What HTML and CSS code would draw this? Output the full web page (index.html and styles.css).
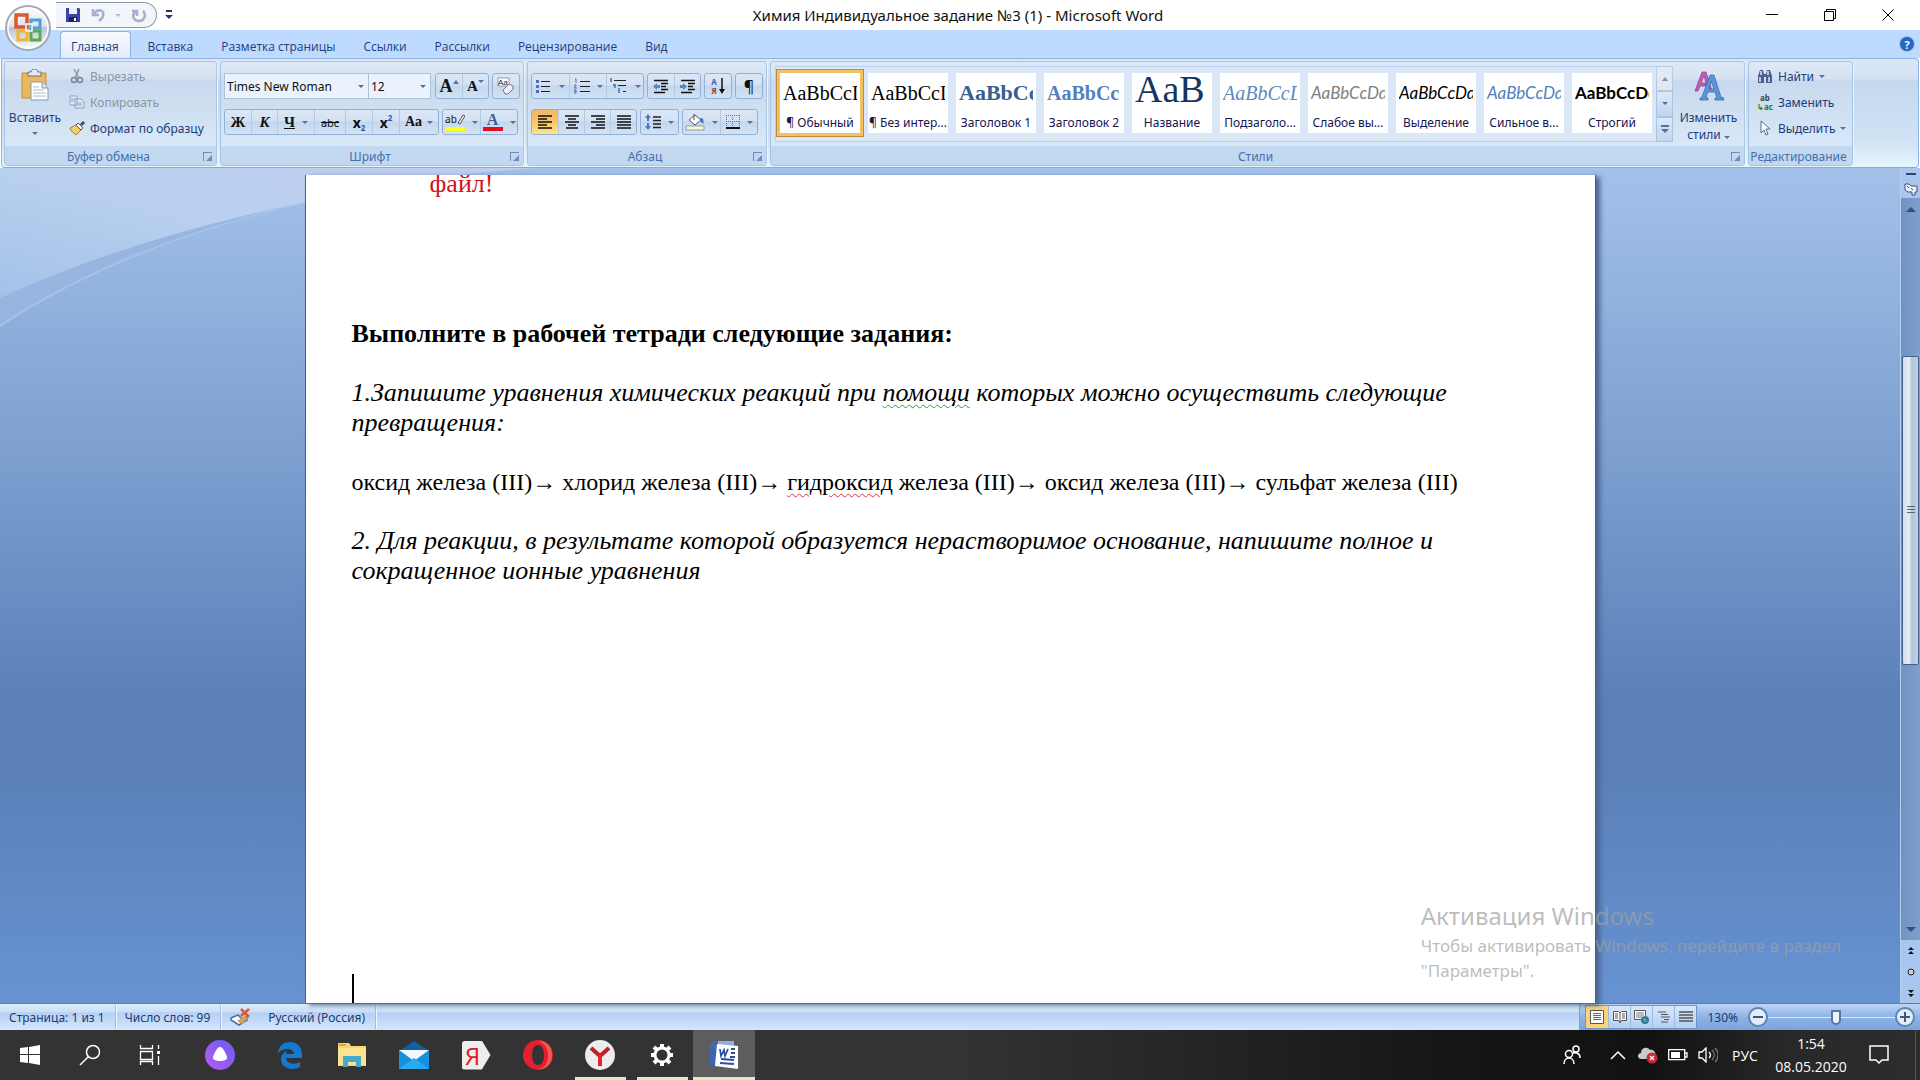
FILE: index.html
```html
<!DOCTYPE html>
<html lang="ru">
<head>
    <meta charset="utf-8">
    <title>Химия Индивидуальное задание №3 (1) - Microsoft Word</title>
    <link rel="stylesheet" href="styles.css">
</head>
<body>
    <header class="top">
        <div class="titlebar">
            <div class="quick">
                <button class="plain" aria-label="Сохранить"><svg width="16" height="16" viewBox="0 0 16 16"><path d="M1 1h13l1 1v13H1z" fill="#3a44a8"/><path d="M4 1h8v6H4z" fill="#e8eefc"/><path d="M4 10h8v5H4z" fill="#1c2358"/><path d="M9 11h2v3H9z" fill="#fff"/></svg></button>
                <button class="plain undo" aria-label="Отменить"><svg width="16" height="16" viewBox="0 0 16 16"><path d="M2 2v6h6M3 7C7 1 14 3 12 9c-1 3-3 4-4 5" fill="none" stroke="#a3b1cb" stroke-width="2.500"/></svg><i class="arrow pale"></i></button>
                <button class="plain redo" aria-label="Вернуть"><svg width="16" height="16" viewBox="0 0 16 16"><path d="M4 5c-4 4-1 9 4 9s8-6 4-10M1 4h5v5" fill="none" stroke="#a3b1cb" stroke-width="2.500"/></svg></button>
            </div>
            <button class="plain customize" aria-label="Настройка панели"><svg width="8" height="10" viewBox="0 0 8 10"><path d="M1 0h6v2H1zM0 5h8L4 9z" fill="#223a6b"/></svg></button>
            <h1 class="title">Химия Индивидуальное задание №3 (1) - Microsoft Word</h1>
            <div class="window-buttons">
                <button class="plain" aria-label="Свернуть"><svg width="14" height="14" viewBox="0 0 14 14"><path d="M1 6.500h12" stroke="#000"/></svg></button>
                <button class="plain" aria-label="Восстановить"><svg width="14" height="14" viewBox="0 0 14 14"><path d="M1.500 3.500h9v9h-9zM3.500 3V1.500h9v9H11" fill="none" stroke="#000"/></svg></button>
                <button class="plain" aria-label="Закрыть"><svg width="14" height="14" viewBox="0 0 14 14"><path d="M1.500 1.500l11 11M12.500 1.500l-11 11" stroke="#000"/></svg></button>
            </div>
        </div>
        <button class="office" aria-label="Кнопка Office">
            <svg width="46" height="46" viewBox="0 0 46 46">
                <defs>
                    <linearGradient id="orb" x1="0" y1="0" x2="0" y2="1"><stop offset="0" stop-color="#fff"/><stop offset=".45" stop-color="#dfe3ee"/><stop offset=".5" stop-color="#b9c4da"/><stop offset="1" stop-color="#fff"/></linearGradient>
                </defs>
                <circle cx="23" cy="23" r="22" fill="url(#orb)" stroke="#a2a9b8" stroke-width="2"/>
                <circle cx="23" cy="23" r="20" fill="none" stroke="#fff" stroke-width="1.500"/>
                <path d="M11 10h11v12H11z" fill="none" stroke="#dc5a2b" stroke-width="3.500"/>
                <path d="M26 15h9v8h-9z" fill="none" stroke="#4aa0d8" stroke-width="3"/>
                <path d="M13 26h9v9h-9z" fill="none" stroke="#f0b429" stroke-width="3"/>
                <path d="M26 26h9v9h-9z" fill="none" stroke="#62a64b" stroke-width="3"/>
                <path d="M21 19h6v7h-6z" fill="none" stroke="#fff" stroke-width="1.500"/>
            </svg>
        </button>
        <nav class="tabs">
            <a href="#" class="active">Главная</a>
            <a href="#">Вставка</a>
            <a href="#">Разметка страницы</a>
            <a href="#">Ссылки</a>
            <a href="#">Рассылки</a>
            <a href="#">Рецензирование</a>
            <a href="#">Вид</a>
            <button class="plain help" aria-label="Справка">?</button>
        </nav>
    </header>

    <div class="ribbon">
        <section class="group">
            <div class="group-body clipboard">
                <button class="big">
                    <svg width="28" height="32" viewBox="0 0 28 32"><path d="M1 4h24v25H1z" fill="#eab95c" stroke="#c08c3a"/><path d="M7 3h3c0-4 7-4 7 0h3v4H7z" fill="#e6e8ee" stroke="#6a6f7c"/><path d="M10 13h11l6 6v12H10z" fill="#fff" stroke="#8796b4"/><path d="M21 13v6h6" fill="#dce6f6" stroke="#8796b4"/><path d="M12 18h6M12 21h11M12 24h13M12 27h13" stroke="#a9b9d6"/></svg>
                    <span>Вставить</span>
                    <i class="arrow"></i>
                </button>
                <div class="list">
                    <button class="item off"><svg width="16" height="16" viewBox="0 0 16 16"><path d="M5 1l5 9M10 1L6 10" stroke="#8a98ad" stroke-width="1.500"/><circle cx="5" cy="12" r="2.500" fill="none" stroke="#7b8698" stroke-width="1.500"/><circle cx="11" cy="12" r="2.500" fill="none" stroke="#7b8698" stroke-width="1.500"/></svg>Вырезать</button>
                    <button class="item off"><svg width="16" height="16" viewBox="0 0 16 16"><path d="M1 2h7v9H1zM6 5h6l3 3v6H6z" fill="#e2ebf8" stroke="#8ca0c8"/><path d="M2 5h4M2 7h3M8 9h5M8 11h5" stroke="#8ca0c8"/></svg>Копировать</button>
                    <button class="item"><svg width="16" height="16" viewBox="0 0 16 16"><path d="M1 8l6-3 5 5-5 5C5 13 2 12 1 8z" fill="#ecd06c" stroke="#a87f28"/><path d="M7 5l2-2 5 5-2 2z" fill="#fff" stroke="#555"/><path d="M11 4l3-3 2 2-3 3z" fill="#3e4a66"/></svg>Формат по образцу</button>
                </div>
            </div>
            <footer><span>Буфер обмена</span><button class="launcher" aria-label="Буфер обмена"></button></footer>
        </section>

        <section class="group">
            <div class="group-body rows">
                <div class="row">
                    <div class="combos">
                        <label class="combo font-name"><select aria-label="Шрифт"><option>Times New Roman</option></select><i class="arrow"></i></label>
                        <label class="combo font-size"><select aria-label="Размер шрифта"><option>12</option></select><i class="arrow"></i></label>
                    </div>
                    <div class="buttons">
                        <button class="tool serif grow">A<i class="arrow up"></i></button>
                        <button class="tool serif shrink">A<i class="arrow"></i></button>
                    </div>
                    <div class="buttons">
                        <button class="tool" aria-label="Очистить формат"><svg width="18" height="18" viewBox="0 0 18 18"><path d="M1 1h11v8H1z" fill="#fff" stroke="#99a"/><text x="1" y="8" font-size="8" font-family="Liberation Sans" fill="#222">Aa</text><path d="M6 13l6-6 4 2v3l-5 5H8z" fill="#eef0fa" stroke="#70748a"/></svg></button>
                    </div>
                </div>
                <div class="row">
                    <div class="buttons">
                        <button class="tool serif">Ж</button>
                        <button class="tool serif"><em>К</em></button>
                        <button class="tool serif wide"><u>Ч</u><i class="arrow"></i></button>
                        <button class="tool strike"><s>abc</s></button>
                        <button class="tool script">x<sub>2</sub></button>
                        <button class="tool script">x<sup>2</sup></button>
                        <button class="tool serif case">Aa<i class="arrow"></i></button>
                    </div>
                    <div class="buttons">
                        <button class="tool wide"><span class="swatch yellow">ab<svg width="8" height="12" viewBox="0 0 8 12"><path d="M1 10L6 2l2 1-5 8z" fill="#eee" stroke="#555"/></svg></span><i class="arrow"></i></button>
                        <button class="tool wide"><span class="swatch red">A</span><i class="arrow"></i></button>
                    </div>
                </div>
            </div>
            <footer><span>Шрифт</span><button class="launcher" aria-label="Шрифт"></button></footer>
        </section>

        <section class="group">
            <div class="group-body rows">
                <div class="row">
                    <div class="buttons">
                        <button class="tool wide" aria-label="Маркеры"><svg width="16" height="16" viewBox="0 0 16 16"><path d="M5 3.500h9M5 8.500h9M5 13.500h9" stroke="#222"/><path d="M0 2h3v3H0zM0 7h3v3H0zM0 12h3v3H0z" fill="#4a6fb5"/></svg><i class="arrow"></i></button>
                        <button class="tool wide" aria-label="Нумерация"><svg width="16" height="16" viewBox="0 0 16 16"><path d="M6 3.500h10M6 8.500h10M6 13.500h10" stroke="#222"/><path d="M1 1h1v4M0 7h2v1l-2 2h3M0 12h2v3H0M2 13H0" fill="none" stroke="#4a6fb5"/></svg><i class="arrow"></i></button>
                        <button class="tool wide" aria-label="Многоуровневый список"><svg width="18" height="16" viewBox="0 0 18 16"><path d="M4 2.500h12M8 7.500h8M13 13.500h3" stroke="#222"/><path d="M1 0v4M5 6v4M5 7h-2M9 10v5" fill="none" stroke="#4a6fb5" stroke-width="1.500"/></svg><i class="arrow"></i></button>
                    </div>
                    <div class="buttons">
                        <button class="tool" aria-label="Уменьшить отступ"><svg width="16" height="16" viewBox="0 0 16 16"><path d="M1 2.500h14M8 5.500h7M8 8.500h5M8 11.500h7M1 14.500h11" stroke="#111" stroke-width="1.500"/><path d="M7 7v3H4v2L0 8.500 4 5v2z" fill="#5b83c8"/></svg></button>
                        <button class="tool" aria-label="Увеличить отступ"><svg width="16" height="16" viewBox="0 0 16 16"><path d="M1 2.500h14M8 5.500h7M8 8.500h5M8 11.500h7M1 14.500h11" stroke="#111" stroke-width="1.500"/><path d="M0 7v3h3v2l4-3.500L3 5v2z" fill="#5b83c8"/></svg></button>
                    </div>
                    <div class="buttons">
                        <button class="tool sort"><span><b>А</b><b>Я</b></span><svg width="6" height="16" viewBox="0 0 6 16"><path d="M3 0v13" stroke="#111" stroke-width="1.500"/><path d="M0 11h6l-3 5z" fill="#111"/></svg></button>
                    </div>
                    <div class="buttons">
                        <button class="tool pilcrow">¶</button>
                    </div>
                </div>
                <div class="row">
                    <div class="buttons">
                        <button class="tool on" aria-label="По левому краю"><svg width="16" height="14" viewBox="0 0 16 14"><path d="M1 1h14M1 4h9M1 7h14M1 10h9M1 13h14" stroke="#111" stroke-width="1.500"/></svg></button>
                        <button class="tool" aria-label="По центру"><svg width="16" height="14" viewBox="0 0 16 14"><path d="M1 1h14M4 4h8M1 7h14M4 10h8M2 13h12" stroke="#111" stroke-width="1.500"/></svg></button>
                        <button class="tool" aria-label="По правому краю"><svg width="16" height="14" viewBox="0 0 16 14"><path d="M1 1h14M6 4h9M1 7h14M6 10h9M1 13h14" stroke="#111" stroke-width="1.500"/></svg></button>
                        <button class="tool" aria-label="По ширине"><svg width="16" height="14" viewBox="0 0 16 14"><path d="M1 1h14M1 4h14M1 7h14M1 10h14M1 13h14" stroke="#111" stroke-width="1.500"/></svg></button>
                    </div>
                    <div class="buttons">
                        <button class="tool wide" aria-label="Междустрочный интервал"><svg width="16" height="16" viewBox="0 0 16 16"><path d="M8 3h8M8 6.500h8M8 10h8M8 13.500h8" stroke="#222" stroke-width="1.300"/><path d="M3 0l3 4H4v3H2V4H0zM3 16l3-4H4V9H2v3H0z" fill="#4a76c0"/></svg><i class="arrow"></i></button>
                    </div>
                    <div class="buttons">
                        <button class="tool wide" aria-label="Заливка"><svg width="20" height="18" viewBox="0 0 20 18"><path d="M4 7l6-5 6 5-6 5z" fill="#fff" stroke="#556"/><path d="M9 1v6" stroke="#556"/><path d="M15 5c4 0 4 3 3 6l-3-3z" fill="#4a76b8"/><path d="M1 13h18v4H1z" fill="#f8f8dc" stroke="#999c88"/></svg><i class="arrow"></i></button>
                        <button class="tool wide" aria-label="Границы"><svg width="14" height="14" viewBox="0 0 14 14"><path d="M.5 0v12M13.500 0v12M6.500 0v12M0 .5h14M0 6.500h14" stroke="#66748e" stroke-dasharray="1 1"/><path d="M0 13h14" stroke="#111" stroke-width="2"/></svg><i class="arrow"></i></button>
                    </div>
                </div>
            </div>
            <footer><span>Абзац</span><button class="launcher" aria-label="Абзац"></button></footer>
        </section>

        <section class="group">
            <div class="group-body styles">
                <div class="gallery">
                    <button class="style selected"><span class="sample times">AaBbCcDd</span><span class="name">¶ Обычный</span></button>
                    <button class="style"><span class="sample times">AaBbCcDd</span><span class="name">¶ Без интер...</span></button>
                    <button class="style"><span class="sample heading1">AaBbCc</span><span class="name">Заголовок 1</span></button>
                    <button class="style"><span class="sample heading2">AaBbCc</span><span class="name">Заголовок 2</span></button>
                    <button class="style"><span class="sample huge">AaB</span><span class="name">Название</span></button>
                    <button class="style"><span class="sample subtitle">AaBbCcDd</span><span class="name">Подзаголо...</span></button>
                    <button class="style"><span class="sample weak">AaBbCcDd</span><span class="name">Слабое вы...</span></button>
                    <button class="style"><span class="sample accent">AaBbCcDd</span><span class="name">Выделение</span></button>
                    <button class="style"><span class="sample strong-accent">AaBbCcDd</span><span class="name">Сильное в...</span></button>
                    <button class="style"><span class="sample strict">AaBbCcDd</span><span class="name">Строгий</span></button>
                </div>
                <div class="gallery-scroll">
                    <button class="off" aria-label="Вверх"><i class="arrow up"></i></button>
                    <button aria-label="Вниз"><i class="arrow"></i></button>
                    <button aria-label="Все стили"><svg width="8" height="8" viewBox="0 0 8 8"><path d="M0 0h8v2H0zM0 4h8L4 8z" fill="#55709f"/></svg></button>
                </div>
                <button class="big change">
                    <svg width="30" height="30" viewBox="0 0 30 30"><path d="M1 20L8 1h4l6 19h-4l-1-5H6l-2 5zM7 12h5L10 5z" fill="#c05cb4" stroke="#8d3c8c" stroke-width=".7"/><path d="M6 29v-2l2-1L16 4h4l7 22 3 1v2h-9v-2h2l-2-6h-7l-2 5 2 1v2zM15 18h5l-3-8z" fill="#5a94dc" stroke="#3364aa" stroke-width=".7"/></svg>
                    <span>Изменить<br>стили <i class="arrow"></i></span>
                </button>
            </div>
            <footer><span>Стили</span><button class="launcher" aria-label="Стили"></button></footer>
        </section>

        <section class="group">
            <div class="group-body editing">
                <div class="list">
                    <button class="item"><svg width="16" height="16" viewBox="0 0 16 16"><path d="M1 8l2-6h3l1 4h2l1-4h3l2 6v7h-6V9H7v6H1z" fill="#4a618f"/><path d="M3 9v5M12 9v5M4 3v4M11 3v4" stroke="#dfe8f8" stroke-width="1.500"/></svg>Найти<i class="arrow"></i></button>
                    <button class="item"><span class="replace"><b>ab</b><b>↳ac</b></span>Заменить</button>
                    <button class="item"><svg width="16" height="16" viewBox="0 0 16 16"><path d="M4 1v12l3-3 2 5 2-1-2-5h4z" fill="#fff" stroke="#5a6c8e"/></svg>Выделить<i class="arrow"></i></button>
                </div>
            </div>
            <footer><span>Редактирование</span></footer>
        </section>
    </div>

    <main class="workspace">
        <svg class="sheen" width="720" height="160" viewBox="0 0 720 160">
            <defs><linearGradient id="sky" x1="0" y1="1" x2="1" y2="0"><stop offset="0" stop-color="#a3c1e8"/><stop offset=".5" stop-color="#b9d0ef"/><stop offset="1" stop-color="#c0cdf0"/></linearGradient></defs>
            <path d="M0 158Q120 78 306 34Q430 6 540 0H0z" fill="#97b5df"/>
            <path d="M0 158Q120 78 306 34" fill="none" stroke="#a6c2e8" stroke-width="2"/>
            <path d="M0 130Q130 70 306 34Q430 6 540 0H0z" fill="url(#sky)"/>
        </svg>
        <article class="page">
            <p class="red">файл!</p>
            <h2>Выполните в рабочей тетради следующие задания:</h2>
            <p class="task">1.Запишите уравнения химических реакций при <span class="grammar">помощи</span> которых можно осуществить следующие превращения:</p>
            <p>оксид железа (III)→ хлорид железа (III)→ <span class="spelling">гидроксид</span> железа (III)→ оксид железа (III)→ сульфат железа (III)</p>
            <p class="task">2. Для реакции, в результате которой образуется нерастворимое основание, напишите полное и сокращенное ионные уравнения</p>
            <div class="caret"></div>
        </article>
        <div class="scrollbar">
            <div class="split"></div>
            <button class="plain ruler" aria-label="Линейка"><svg width="14" height="14" viewBox="0 0 14 14"><path d="M1 2h4l2 2h6v6h-2v3H8v-3H4L1 8z" fill="#e8f0fc" stroke="#44506e"/><path d="M3 4l2 2M7 6l2 2" stroke="#44506e"/></svg></button>
            <div class="track">
                <button class="plain" aria-label="Вверх"><i class="arrow up"></i></button>
                <div class="space before"></div>
                <div class="thumb"><i></i></div>
                <div class="space after"></div>
                <button class="plain" aria-label="Вниз"><i class="arrow"></i></button>
            </div>
            <button class="plain jump" aria-label="Предыдущая страница"><svg width="8" height="8" viewBox="0 0 8 8"><path d="M4 0l3 3H1zM4 4l3 3H1z" fill="#111"/></svg></button>
            <button class="plain jump" aria-label="Выбор объекта"><svg width="8" height="8" viewBox="0 0 8 8"><circle cx="4" cy="4" r="3" fill="#ccc" stroke="#222"/></svg></button>
            <button class="plain jump" aria-label="Следующая страница"><svg width="8" height="8" viewBox="0 0 8 8"><path d="M4 4L1 1h6zM4 8L1 5h6z" fill="#111"/></svg></button>
        </div>
        <aside class="watermark">
            <h3>Активация Windows</h3>
            <p>Чтобы активировать Windows, перейдите в раздел<br>"Параметры".</p>
        </aside>
    </main>

    <div class="statusbar">
        <span class="cell">Страница: 1 из 1</span>
        <span class="cell">Число слов: 99</span>
        <span class="cell lang"><svg width="20" height="18" viewBox="0 0 20 18"><path d="M1 10l7-3 4 4 5-3v4l-8 5-8-5z" fill="#fff" stroke="#4d6ea8" stroke-width="1.500"/><path d="M7 13l5 3 6-6-3-2z" fill="#d2a15a"/><path d="M11 1l8 8M19 1l-8 7" stroke="#e2582c" stroke-width="2.500"/></svg>Русский (Россия)</span>
        <div class="zoom-panel">
            <div class="views">
                <button class="on" aria-label="Разметка страницы"><svg width="14" height="14" viewBox="0 0 14 14"><path d="M.5.5h13v13H.5z" fill="#fff" stroke="#555"/><path d="M3 3.500h8M3 5.500h8M3 7.500h8M3 9.500h8" stroke="#666"/></svg></button>
                <button aria-label="Режим чтения"><svg width="14" height="14" viewBox="0 0 14 14"><path d="M.5 1.500h5L7 3l1.500-1.500h5v9h-5L7 13l-1.500-2.500h-5z" fill="#fff" stroke="#555"/><path d="M7 3v9M2 4h3M2 6h3M2 8h3M9 4h3M9 6h3M9 8h3" stroke="#555"/></svg></button>
                <button aria-label="Веб-документ"><svg width="16" height="14" viewBox="0 0 16 14"><path d="M.5.5h11v9H.5z" fill="#fff" stroke="#555"/><path d="M2 3h8M2 5h8M2 7h6" stroke="#777"/><circle cx="11" cy="10" r="4" fill="#2f7d9c"/><path d="M9 8l3 1 1 3-3-1z" fill="#63b37a"/></svg></button>
                <button aria-label="Структура"><svg width="14" height="12" viewBox="0 0 14 12"><path d="M1 1h8M4 3.500h7M4 6h9M7 8.500h5M4 11h7" stroke="#555"/></svg></button>
                <button aria-label="Черновик"><svg width="14" height="12" viewBox="0 0 14 12"><path d="M0 1h14M0 4h14M0 7h14M0 10h14" stroke="#555" stroke-width="1.500"/></svg></button>
            </div>
            <span class="percent">130%</span>
            <button class="round" aria-label="Уменьшить"><svg width="10" height="10" viewBox="0 0 10 10"><path d="M0 5h10" stroke="#445577" stroke-width="2"/></svg></button>
            <input type="range" class="zoom" min="0" max="100" value="54" aria-label="Масштаб">
            <button class="round" aria-label="Увеличить"><svg width="10" height="10" viewBox="0 0 10 10"><path d="M0 5h10M5 0v10" stroke="#445577" stroke-width="2"/></svg></button>
        </div>
    </div>

    <div class="taskbar">
        <button class="task-button" aria-label="Пуск"><svg width="20" height="20" viewBox="0 0 20 20"><path d="M0 3l8-1v7H0zM9 2l11-2v9H9zM0 10h8v8l-8-1zM9 10h11v10L9 18z" fill="#fff"/></svg></button>
        <button class="task-button" aria-label="Поиск"><svg width="22" height="22" viewBox="0 0 22 22"><circle cx="14" cy="8" r="6.500" fill="none" stroke="#fff" stroke-width="1.500"/><path d="M9.500 12.500L1 21" stroke="#fff" stroke-width="1.500"/></svg></button>
        <button class="task-button" aria-label="Представление задач"><svg width="22" height="20" viewBox="0 0 22 20"><path d="M1.500 0v3.500h12V0M1.500 20v-3.500h12V20M1.500 6.500h12v8h-12zM19.500 0v4M19.500 11v9" fill="none" stroke="#fff" stroke-width="1.300"/><path d="M18 6h3v3h-3z" fill="#fff"/></svg></button>
        <button class="task-button alice" aria-label="Алиса"><svg width="30" height="30" viewBox="0 0 30 30"><defs><linearGradient id="al" x1="0" y1="1" x2="1" y2="0"><stop offset="0" stop-color="#b85cf5"/><stop offset="1" stop-color="#6a5cf0"/></linearGradient></defs><circle cx="15" cy="15" r="15" fill="url(#al)"/><path d="M15 7c3 0 7 8 7 11 0 4-14 4-14 0 0-3 4-11 7-11z" fill="#fff"/></svg></button>
        <button class="task-button" aria-label="Edge"><svg width="26" height="28" viewBox="0 0 26 28"><path d="M1 12C2 4 7 1 13 1c8 0 12 6 12 13v3H9c0 6 9 7 14 4v5c-7 4-19 2-19-8 0-4 3-7 6-8-1 1-1 2-1 3h8c0-6-11-7-16-1z" fill="#1478cf"/></svg></button>
        <button class="task-button" aria-label="Проводник"><svg width="28" height="24" viewBox="0 0 28 24"><path d="M0 0h11l2 3h15v20H0z" fill="#f8d66d"/><path d="M0 5h28v17H0z" fill="#fbe391"/><path d="M1 1h7v2H1z" fill="#e5a728"/><path d="M5 13h18v11h-5v-5h-8v5H5z" fill="#45a8cc"/></svg></button>
        <button class="task-button" aria-label="Почта"><svg width="30" height="28" viewBox="0 0 30 28"><path d="M0 10L15 0l15 10z" fill="#1061a4"/><path d="M0 9h30v19H0z" fill="#1590dc"/><path d="M0 9h30L15 20z" fill="#f3f8fc"/><path d="M0 28l15-11 15 11z" fill="#28aaf0"/></svg></button>
        <button class="task-button" aria-label="Яндекс"><span class="yandex">Я</span></button>
        <button class="task-button" aria-label="Opera"><svg width="30" height="30" viewBox="0 0 30 30"><path fill-rule="evenodd" d="M15 0a15 15 0 100 30 15 15 0 000-30zM15 5c4 0 6 4 6 10s-2 10-6 10-6-4-6-10 2-10 6-10z" fill="#e2202f"/><path d="M15 1c9-1 14 6 14 14s-5 15-14 14c9-1 10-8 10-14S22 3 15 1z" fill="#f25c50"/></svg></button>
        <button class="task-button running" aria-label="Яндекс.Браузер"><svg width="30" height="30" viewBox="0 0 30 30"><circle cx="15" cy="15" r="15" fill="#ececec"/><path d="M6 8l9 8 9-8" fill="none" stroke="#c21f24" stroke-width="4"/><path d="M15 15v11" stroke="#e02a2a" stroke-width="4"/></svg></button>
        <button class="task-button running" aria-label="Параметры"><svg width="24" height="24" viewBox="0 0 24 24"><circle cx="12" cy="12" r="7" fill="none" stroke="#fff" stroke-width="3"/><path d="M12 1v4M12 19v4M1 12h4M19 12h4M4 4l3 3M17 17l3 3M20 4l-3 3M7 17l-3 3" stroke="#fff" stroke-width="4"/></svg></button>
        <button class="task-button running current" aria-label="Word"><svg width="30" height="28" viewBox="0 0 30 28"><path d="M1 5l5-5h19v24H1z" fill="#8fb0e2"/><path d="M1 5l5-5h3v24H1z" fill="#3f66b2"/><path d="M8 3l21 2v23L6 25z" fill="#fff"/><path d="M11 8l1 7 3-6 1 6 3-7" fill="none" stroke="#2a4f9e" stroke-width="1.700"/><path d="M22 8h4M22 12h4M21 16h5M12 18l13 1M11 22l14 1" stroke="#2a4f9e" stroke-width="2"/></svg></button>
        <div class="tray">
            <button class="plain people" aria-label="Люди"><svg width="18" height="20" viewBox="0 0 18 20"><circle cx="13" cy="4" r="3" fill="none" stroke="#fff" stroke-width="1.500"/><circle cx="6" cy="9" r="3.500" fill="none" stroke="#fff" stroke-width="1.500"/><path d="M1 19c0-8 10-8 10 0M10 8c3-1 7 0 7 5" fill="none" stroke="#fff" stroke-width="1.500"/></svg></button>
            <button class="plain" aria-label="Скрытые значки"><svg width="16" height="10" viewBox="0 0 16 10"><path d="M1 9l7-7 7 7" fill="none" stroke="#fff" stroke-width="1.500"/></svg></button>
            <button class="plain" aria-label="OneDrive"><svg width="20" height="18" viewBox="0 0 20 18"><path d="M3 13c-4 0-4-6 0-6 0-5 6-7 9-3 4-1 7 4 5 9z" fill="#c9c9c9"/><circle cx="14" cy="12" r="5.500" fill="#c9273a"/><path d="M12 10l4 4M16 10l-4 4" stroke="#fff" stroke-width="1.300"/></svg></button>
            <button class="plain" aria-label="Батарея"><svg width="20" height="12" viewBox="0 0 20 12"><path d="M.7.7h16v10H.7zM17 4h2v4h-2" fill="none" stroke="#fff" stroke-width="1.300"/><path d="M3 3h9v6H3z" fill="#fff"/></svg></button>
            <button class="plain" aria-label="Громкость"><svg width="20" height="16" viewBox="0 0 20 16"><path d="M1 5h3l4-4v14l-4-4H1z" fill="none" stroke="#fff" stroke-width="1.300"/><path d="M11 5c2 2 2 4 0 6" fill="none" stroke="#fff" stroke-width="1.300"/><path d="M14 3c3 3 3 7 0 10M17 1c4 4 4 10 0 14" fill="none" stroke="#777" stroke-width="1.300"/></svg></button>
            <button class="plain language">РУС</button>
            <button class="plain clock">1:54<br>08.05.2020</button>
            <button class="plain notes" aria-label="Уведомления"><svg width="20" height="20" viewBox="0 0 20 20"><path d="M1 1h18v14h-6l-3 3-3-3H1z" fill="none" stroke="#fff" stroke-width="1.500"/></svg></button>
        </div>
    </div>
</body>
</html>
```
FILE: styles.css
```css
* {
    box-sizing: border-box;
}
body {
    margin: 0;
    height: 100vh;
    display: flex;
    flex-direction: column;
    overflow: hidden;
    font-family: "Noto Sans", "Open Sans", sans-serif;
    font-size: 12px;
    color: #1e3c7b;
}
button, select {
    font: inherit;
    color: inherit;
}
button {
    padding: 0;
    border: none;
    background: none;
    display: flex;
    align-items: center;
    justify-content: center;
}
svg {
    display: block;
    flex: none;
}
.arrow {
    display: inline-block;
    flex: none;
    border: 3px solid transparent;
    border-top-color: #55709f;
    border-bottom: none;
}
.arrow.pale {
    border-top-color: #b4bccb;
}
.arrow.up {
    border-top: none;
    border-bottom: 4px solid #55709f;
}

/* title bar and tabs */
.top {
    position: relative;
    background: #bedaff;
}
.titlebar {
    height: 30px;
    background: #fff;
    display: flex;
    align-items: center;
    padding: 0 3px 0 56px;
}
.quick {
    width: 101px;
    height: 26px;
    display: flex;
    align-items: center;
    padding-left: 9px;
    gap: 10px;
    background: #f2f5fa;
    border: 1px solid #8d98ab;
    border-left: none;
    border-radius: 0 13px 13px 0;
}
.undo {
    gap: 8px;
}
.customize {
    margin-left: 8px;
}
.title {
    flex: 1;
    margin: 0;
    font-size: 15px;
    font-weight: normal;
    color: #111;
    text-align: center;
}
.window-buttons {
    display: flex;
}
.window-buttons button {
    width: 58px;
    height: 30px;
}
.office {
    position: absolute;
    left: 5px;
    top: 5px;
    border-radius: 50%;
}
.tabs {
    height: 28px;
    display: flex;
    align-items: stretch;
    padding: 1px 6px 0 57px;
    font-family: "Open Sans", sans-serif;
}
.tabs a {
    margin: 0 3px;
    padding: 0 10px;
    line-height: 30px;
    color: #1e3c7b;
    text-decoration: none;
    border: 1px solid transparent;
    border-bottom: none;
}
.tabs a.active {
    padding: 0 11px 0 10px;
    background: linear-gradient(#f8fbff, #e2ecf8);
    border-color: #8db2e3;
    border-radius: 4px 4px 0 0;
}
.help {
    width: 14px;
    height: 14px;
    margin: 6px 0 0 auto;
    border-radius: 50%;
    background: #2766c0;
    box-shadow: 0 0 0 1px #9cc0ee;
    color: #fff;
    font-size: 11px;
    font-weight: bold;
}

/* ribbon */
.ribbon {
    display: flex;
    gap: 3px;
    margin: 0 1px;
    padding: 2px 2px 1px;
    background: linear-gradient(#dbe7f5 0, #d3e1f2 18%, #c6d8ee 20%, #d0e2f4 75%, #e4f6fd 100%);
    border: 1px solid #8db2e3;
    border-bottom-color: #86aed0;
    border-radius: 0 4px 4px 4px;
    position: relative;
    z-index: 1;
}
.group {
    border: 1px solid #a9c5e4;
    border-radius: 3px;
    background: linear-gradient(#dfe9f6 0, #d5e2f3 16%, #c8d9ee 18%, #d8e8f7 82%);
    box-shadow: 1px 0 0 #eaf4fc;
    overflow: hidden;
}
.group-body {
    display: flex;
    height: 84px;
}
.group footer {
    display: flex;
    align-items: center;
    height: 19px;
    background: #c1d8f0;
    color: #466fae;
    padding: 1px 4px 0 0;
}
.group footer span {
    flex: 1;
    text-align: center;
}
.launcher {
    width: 9px;
    height: 9px;
    margin-left: -9px;
    border-left: 1px solid #6d8cb8;
    border-top: 1px solid #6d8cb8;
    position: relative;
}
.launcher::after {
    content: "";
    position: absolute;
    right: 0;
    bottom: 0;
    border: 3px solid #6d8cb8;
    border-left-color: transparent;
    border-top-color: transparent;
}
.clipboard {
    width: 211px;
}
.big {
    flex-direction: column;
    justify-content: flex-start;
    width: 60px;
    padding-top: 7px;
    line-height: 17px;
}
.big span {
    margin: 8px 0 6px;
}
.list {
    display: flex;
    flex-direction: column;
    padding: 1px 4px;
}
.item {
    height: 26px;
    justify-content: flex-start;
    gap: 5px;
    white-space: nowrap;
}
.item.off {
    color: #8e959f;
}
.rows {
    flex-direction: column;
    gap: 10px;
    padding: 11px 3px;
}
.row {
    display: flex;
    gap: 3px;
}
.combos {
    display: flex;
    margin-right: 1px;
}
.combo {
    display: flex;
    align-items: center;
    height: 26px;
    background: #eaf2fb;
    border: 1px solid #abc1de;
    padding-right: 4px;
}
.combo + .combo {
    border-left: none;
}
.combo select {
    appearance: none;
    flex: 1;
    min-width: 0;
    height: 24px;
    padding: 0 2px;
    border: none;
    background: none;
    color: #111;
}
.font-name {
    width: 145px;
}
.font-size {
    width: 62px;
}
.buttons {
    display: flex;
    height: 26px;
    border: 1px solid #93b0d6;
    border-radius: 3px;
    background: linear-gradient(#dbe7f6 0, #d3e1f3 45%, #c4d7ee 50%, #d2e3f5 100%);
    overflow: hidden;
}
.tool {
    width: 26px;
    color: #111;
}
.tool + .tool {
    border-left: 1px solid #b4cbe6;
}
.tool.wide {
    width: 37px;
    gap: 7px;
}
.tool.on {
    background: linear-gradient(#f3b56b, #fbc063 40%, #fbe48c);
}
.tool.case {
    width: 39px;
    gap: 5px;
    font-size: 14px;
}
.serif {
    font-family: "Liberation Serif", serif;
    font-weight: bold;
    font-size: 15px;
}
.tool sup, .tool sub {
    font-size: 8px;
    color: #2f5cab;
    line-height: 8px;
}
.tool sup {
    align-self: flex-start;
    padding-top: 4px;
}
.tool sub {
    align-self: flex-end;
    padding-bottom: 2px;
}
.tool.grow {
    font-size: 18px;
}
.grow .arrow, .shrink .arrow {
    align-self: flex-start;
    margin-top: 6px;
}
.tool.strike {
    width: 31px;
    font-size: 11px;
}
.tool.script {
    width: 27px;
    font-weight: bold;
    font-size: 14px;
}
.swatch {
    display: flex;
    justify-content: center;
    width: 20px;
    height: 18px;
    font-size: 10px;
    line-height: 13px;
    border-bottom: 4px solid #ffff1e;
}
.swatch.red {
    border-color: #e00f1e;
    color: #3d5f96;
    font-family: "Liberation Serif", serif;
    font-weight: bold;
    font-size: 16px;
}
.sort {
    gap: 2px;
}
.sort b {
    display: block;
    font-size: 8px;
    line-height: 9px;
    color: #3b62a8;
}
.sort b + b {
    color: #a03b3b;
}
.pilcrow {
    font-size: 16px;
}

/* style gallery */
.styles {
    padding-left: 4px;
}
.gallery {
    display: flex;
    margin: 4px 0;
    background: #d9e7f6;
    border: 1px solid #b9d0ed;
    border-right: none;
}
.style {
    flex-direction: column;
    justify-content: flex-start;
    width: 80px;
    height: 60px;
    margin: 6px 4px;
    padding: 0 3px;
    background: #fff;
    overflow: hidden;
    color: #15154f;
}
.style.selected {
    outline: 3px solid #f0c261;
    box-shadow: 0 0 0 4px #c08a3c;
}
.sample {
    width: 74px;
    height: 40px;
    line-height: 40px;
    overflow: hidden;
    text-align: left;
    white-space: nowrap;
    color: #000;
    font-family: Lato, sans-serif;
    font-size: 17px;
}
.name {
    line-height: 19px;
    white-space: nowrap;
}
.times, .heading1, .heading2, .huge, .subtitle {
    font-family: "Liberation Serif", serif;
    font-size: 20px;
}
.heading1, .heading2 {
    font-weight: bold;
    color: #365f91;
}
.heading1 {
    font-size: 22px;
}
.heading2 {
    color: #4f81bd;
}
.huge {
    color: #17365d;
    font-size: 38px;
    line-height: 32px;
}
.subtitle {
    font-style: italic;
    color: #5b8abf;
}
.weak, .accent, .strong-accent {
    font-style: italic;
}
.weak {
    color: #808080;
}
.strong-accent {
    color: #4f81bd;
}
.strict {
    font-weight: bold;
}
.gallery-scroll {
    display: flex;
    flex-direction: column;
    width: 17px;
    margin: 4px 0;
}
.gallery-scroll button {
    flex: 1;
    border: 1px solid #a9c3e2;
    background: linear-gradient(#dce9f8, #c0d6f0);
}
.gallery-scroll .off {
    background: #eaedf1;
    opacity: .7;
}
.change {
    width: 71px;
    padding-top: 9px;
}
.editing {
    width: 103px;
    padding-left: 4px;
}
.replace b {
    display: block;
    width: 16px;
    font-size: 8px;
    line-height: 9px;
    color: #444;
}
.replace b + b {
    color: #2d7a30;
}

/* document */
.workspace {
    flex: 1;
    min-height: 0;
    position: relative;
    display: flex;
    background: linear-gradient(#a3c1ea 0, #7fa2d2 32%, #5b80b8 64%, #5b80b8 72%, #6793d2 100%);
}
.sheen {
    position: absolute;
    left: 0;
    top: 0;
}
.page {
    position: relative;
    width: 1291px;
    margin: 7px auto 0;
    padding: 0 120px 0 46px;
    overflow: hidden;
    background: #fff;
    border-left: 1px solid #4d5f7c;
    border-right: 1px solid #4d5f7c;
    box-shadow: 4px 2px 5px #4b6690;
    font-family: "Liberation Serif", serif;
    font-size: 24px;
    line-height: 30px;
    color: #000;
}
.page p, .page h2 {
    margin: 0 0 29px;
}
.page h2, .page .task, .page .red {
    font-size: 26px;
}
.page .red {
    margin: -6px 0 120px;
    padding-left: 78px;
    color: #d0141c;
}
.page .task {
    font-style: italic;
}
.grammar, .spelling {
    text-decoration: underline wavy 1px #2c9b3c;
    text-underline-offset: 3px;
}
.spelling {
    text-decoration-color: #e03040;
}
.caret {
    position: absolute;
    left: 46px;
    bottom: 0;
    width: 2px;
    height: 29px;
    background: #000;
}
.scrollbar {
    width: 20px;
    display: flex;
    flex-direction: column;
    align-items: center;
    background: #a9c6ee;
    border-left: 1px solid #b7cff0;
}
.split {
    width: 10px;
    height: 2px;
    margin: 5px 0;
    background: #33436b;
}
.ruler {
    height: 18px;
}
.track {
    flex: 1;
    width: 100%;
    display: flex;
    flex-direction: column;
    background: linear-gradient(90deg, #6f92c2, #7fa0cc);
}
.track button {
    height: 22px;
}
.track .arrow {
    border-width: 5px;
    border-top-color: #344e86;
    border-bottom-width: 0;
}
.track .arrow.up {
    border-width: 0 5px 5px;
    border-bottom-color: #344e86;
}
.before {
    flex: 136;
}
.thumb {
    flex: 308;
    margin: 0 1px;
    border: 1px solid #43608f;
    border-radius: 2px;
    background: linear-gradient(90deg, #d3deea, #e6ecf2 40%, #b4c4d6 60%, #c3d2e2);
    display: flex;
    align-items: center;
    justify-content: center;
}
.thumb i {
    width: 8px;
    height: 8px;
    background: repeating-linear-gradient(#55657c 0, #55657c 1px, transparent 1px, transparent 3px);
}
.after {
    flex: 254;
}
.jump {
    height: 21px;
}
.watermark {
    position: absolute;
    left: 74%;
    bottom: 20px;
    color: rgba(160, 160, 160, .7);
}
.watermark h3 {
    margin: 0;
    font-size: 24px;
    font-weight: normal;
    line-height: 34px;
}
.watermark p {
    margin: 0;
    font-size: 17px;
    line-height: 25px;
}

/* status bar */
.statusbar {
    height: 27px;
    display: flex;
    align-items: center;
    border-top: 1px solid #567db0;
    background: linear-gradient(#dcebfc 0, #cbdff8 30%, #b5d0f3 34%, #c5dcf8 70%, #d5e6fc 100%);
    color: #1b3a75;
}
.cell {
    display: flex;
    align-items: center;
    gap: 18px;
    height: 24px;
    padding: 0 10px 0 9px;
    border-right: 1px solid #9fbde4;
    box-shadow: 1px 0 0 #eef6ff;
}
.zoom-panel {
    display: flex;
    align-items: center;
    height: 26px;
    margin-left: auto;
    padding: 0 5px;
    background: linear-gradient(#bcd5f5, #8eb3e5 50%, #7aa4dd);
    border-left: 1px solid #7ea3d4;
}
.views {
    display: flex;
    border: 1px solid #6c94cc;
    background: linear-gradient(#d8e7fb, #b6d0f2);
}
.views button {
    width: 22px;
    height: 22px;
}
.views button + button {
    border-left: 1px solid #9dbbe2;
}
.views .on {
    background: #fbd475;
}
.percent {
    margin: 0 10px;
}
.round {
    width: 20px;
    height: 20px;
    border: 2px solid #6381b2;
    border-radius: 50%;
    background: #e2edfb;
}
.zoom {
    appearance: none;
    width: 127px;
    height: 20px;
    margin: 0;
    background: linear-gradient(#dce9fb, #dce9fb) center / 100% 1px no-repeat;
}
.zoom::-webkit-slider-thumb {
    appearance: none;
    width: 10px;
    height: 15px;
    border: 2px solid #5b7499;
    border-radius: 1px 1px 5px 5px;
    background: #eef4fc;
}

/* taskbar */
.taskbar {
    display: flex;
    height: 50px;
    background: linear-gradient(90deg, #333 0, #333 50%, #151515 76%, #121212 86%, #282828 93%, #2d2d2d 100%);
    color: #fff;
    font-family: "Open Sans", sans-serif;
}
.task-button {
    width: 60px;
    height: 50px;
}
.alice {
    width: 79px;
}
.alice ~ .task-button {
    width: 62px;
}
.running {
    background: linear-gradient(#d8f0b8, #d8f0b8) bottom / 51px 3px no-repeat;
}
.running.current {
    background: linear-gradient(#d8f0b8, #d8f0b8) bottom / 100% 3px no-repeat #5d5d5d;
}
.yandex {
    width: 29px;
    height: 29px;
    padding-right: 7px;
    line-height: 29px;
    background: #eee;
    border-radius: 3px;
    clip-path: polygon(0 0, 70% 0, 100% 50%, 70% 100%, 0 100%);
    color: #e01a22;
    font-size: 24px;
}
.tray {
    display: flex;
    align-items: center;
    margin-left: auto;
    margin-right: 4px;
    padding-right: 12px;
    font-size: 14px;
    line-height: 23px;
    border-right: 1px solid #555;
}
.tray button {
    width: 30px;
    height: 50px;
}
.tray .people {
    width: 62px;
}
.tray .language {
    width: 44px;
}
.tray .clock {
    width: 88px;
}
.tray .notes {
    width: 48px;
}
```
